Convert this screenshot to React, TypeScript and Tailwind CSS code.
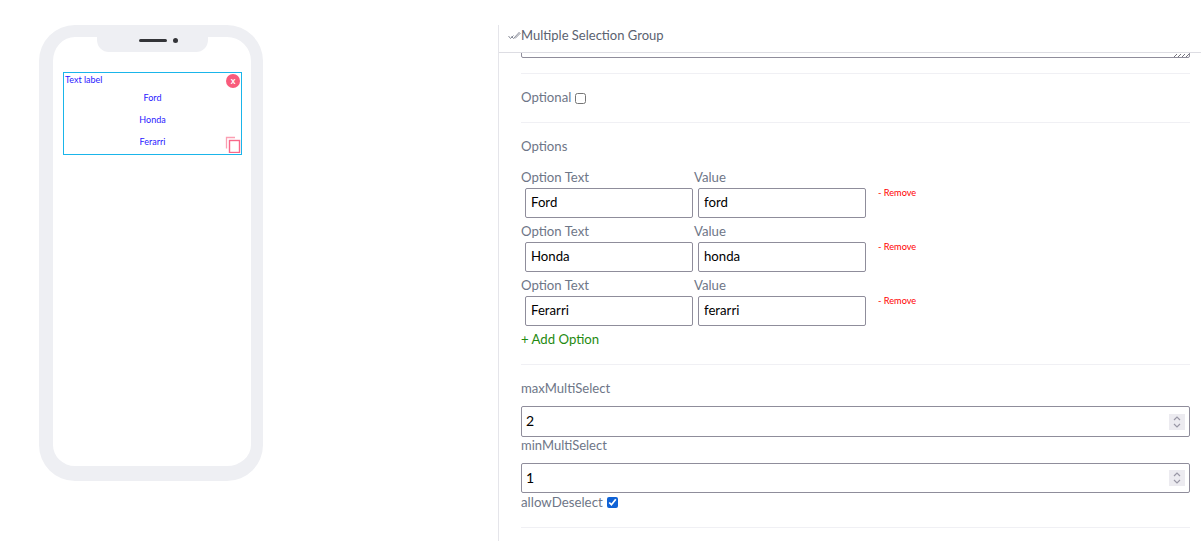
const labelFont = "font-['Lato','Noto_Sans',sans-serif]";

function OptionRow({ text, value }: { text: string; value: string }) {
  return (
    <div className="flex h-[54px] items-start">
      <div className="flex w-[173px] flex-col">
        <span className="h-[20px] pt-[1px] text-[13.2px] leading-[17px] text-[#6e7687]">Option Text</span>
        <input readOnly value={text} className="ml-[4px] h-[30px] w-[168px] rounded-[2px] border border-[#8f8d9b] px-[5px] pb-[2px] text-[13.2px] text-black outline-none" />
      </div>
      <div className="flex w-[173px] flex-col">
        <span className="h-[20px] pt-[1px] text-[13.2px] leading-[17px] text-[#6e7687]">Value</span>
        <input readOnly value={value} className="ml-[4px] h-[30px] w-[168px] rounded-[2px] border border-[#8f8d9b] px-[5px] pb-[2px] text-[13.2px] text-black outline-none" />
      </div>
      <span className="ml-[11px] mt-[19px] text-[9.2px] leading-[12px] text-[#ff0000]">- Remove</span>
    </div>
  );
}

function Spinner() {
  return (
    <div className="absolute right-[5px] top-1/2 flex h-[16px] w-[16px] -translate-y-1/2 items-center justify-center bg-[#ecebf0]">
      <svg className="h-[12px] w-[8px]" viewBox="0 0 8 12" fill="none" stroke="#9a98a6" strokeWidth="1.2">
        <path d="M1 4l3-3 3 3M1 8l3 3 3-3" />
      </svg>
    </div>
  );
}

function NumberField({ value, h }: { value: number; h: string }) {
  return (
    <div className="relative w-[669px]">
      <input
        readOnly
        value={value}
        className={`block ${h} w-full rounded-[2px] border border-[#8f8d9b] px-[4px] pb-[2px] text-[14px] text-black outline-none`}
      />
      <Spinner />
    </div>
  );
}

export default function App() {
  return (
    <div className={`flex h-[541px] w-[1201px] overflow-hidden bg-white ${labelFont}`}>
      <div className="w-[498px] shrink-0 pl-[39px] pt-[25px]">
        <div className="relative h-[456px] w-[224px] rounded-[36px] border-l-[14px] border-r-[12px] border-t-[12px] border-b-[15px] border-[#eeeff3] bg-white pt-[35px]">
          <div className="absolute left-[44px] top-0 flex h-[15px] w-[111px] items-start justify-center gap-[6px] rounded-b-[12px] bg-[#eeeff3] pl-[11px] pt-[1px]">
            <div className="mt-[1px] h-[3px] w-[28px] rounded-full bg-[#333438]" />
            <div className="h-[5px] w-[5px] rounded-full bg-[#333438]" />
          </div>
          <div className="relative ml-[10px] flex h-[83px] w-[179px] flex-col border border-[#1ab5ea] text-[9px] text-[#2a20ff]">
            <span className="pl-[1px] pt-[1px] text-[9px] leading-[12px]">Text label</span>
            <span className="mt-[6px] text-center leading-[12px]">Ford</span>
            <span className="mt-[10px] text-center leading-[12px]">Honda</span>
            <span className="mt-[10px] text-center leading-[12px]">Ferarri</span>
            <div className="absolute right-[1px] top-[1px] flex h-[14px] w-[14px] items-center justify-center rounded-full bg-[#f95b7b] pb-[1px] text-[9px] font-bold leading-none text-white">x</div>
            <svg className="absolute bottom-[1px] right-0 h-[17px] w-[16px]" viewBox="0 0 16 17" fill="none">
              <path d="M1.5 12.5V1.5H10" stroke="#fb9fb2" strokeWidth="1.3" />
              <rect x="4.5" y="4.5" width="10" height="12" stroke="#f9688a" strokeWidth="1.4" />
            </svg>
          </div>
        </div>
      </div>

      <div className="mt-[25px] flex h-[516px] w-[703px] shrink-0 flex-col border-l border-[#e5e5ea]">
        <div className="flex h-[28px] shrink-0 items-center border-b border-[#dddde3] pl-[9px] pb-[6px] text-[13px] text-[#5b6270]">
          <svg className="h-[9px] w-[13px]" viewBox="0 0 13 9" fill="none" stroke="#7a7f8c" strokeWidth="0.9">
            <path d="M0.5 5l2 2.5 3-3M3.5 5.5l2 2L11.5 1M7 7.5L12.5 2" />
          </svg>
          <span className="whitespace-nowrap">Multiple Selection Group</span>
        </div>
        <div className="flex-1 overflow-hidden pl-[22px] pr-[11px]">
          <div className="relative -mt-[25px] w-[669px]">
            <textarea readOnly className="block h-[30px] w-full resize-none rounded-[2px] border border-[#8f8d9b] outline-none" />
            <svg className="absolute bottom-[1px] right-[1px] h-[4px] w-[16px]" viewBox="0 0 16 4" fill="none" stroke="#77757f" strokeWidth="1">
              <path d="M1 4l3-3M5 4l3-3M9 4l3-3M13 4l3-3" />
            </svg>
          </div>
          <div className="mt-[15px] border-t border-[#f0f0f4]" />
          <div className="flex h-[48px] items-center gap-[4px] text-[13.2px] text-[#6e7687]">
            <span>Optional</span>
            <input type="checkbox" readOnly className="h-[11px] w-[11px] appearance-auto" />
          </div>
          <div className="border-t border-[#f0f0f4]" />
          <div className="mt-[15px] text-[13.2px] leading-[17px] text-[#6e7687]">Options</div>
          <div className="mt-[13px] flex flex-col">
            <OptionRow text="Ford" value="ford" />
            <OptionRow text="Honda" value="honda" />
            <OptionRow text="Ferarri" value="ferarri" />
          </div>
          <div className="pt-[1px] text-[13.2px] leading-[17px] text-[#1f8a10]">+ Add Option</div>
          <div className="mt-[16px] border-t border-[#f0f0f4]" />
          <div className="mt-[15px] text-[13.1px] leading-[17px] text-[#6e7687]">maxMultiSelect</div>
          <div className="mt-[9px]"><NumberField value={2} h="h-[31px]" /></div>
          <div className="pt-[1px] text-[13px] leading-[15px] text-[#6e7687]">minMultiSelect</div>
          <div className="mt-[10px]"><NumberField value={1} h="h-[30px]" /></div>
          <div className="flex h-[19px] items-center gap-[4px] text-[13.3px] text-[#6e7687]">
            <span>allowDeselect</span>
            <input type="checkbox" readOnly checked className="h-[11px] w-[11px] appearance-auto accent-[#0f62d6]" />
          </div>
          <div className="mt-[15px] border-t border-[#f0f0f4]" />
        </div>
      </div>
    </div>
  );
}
